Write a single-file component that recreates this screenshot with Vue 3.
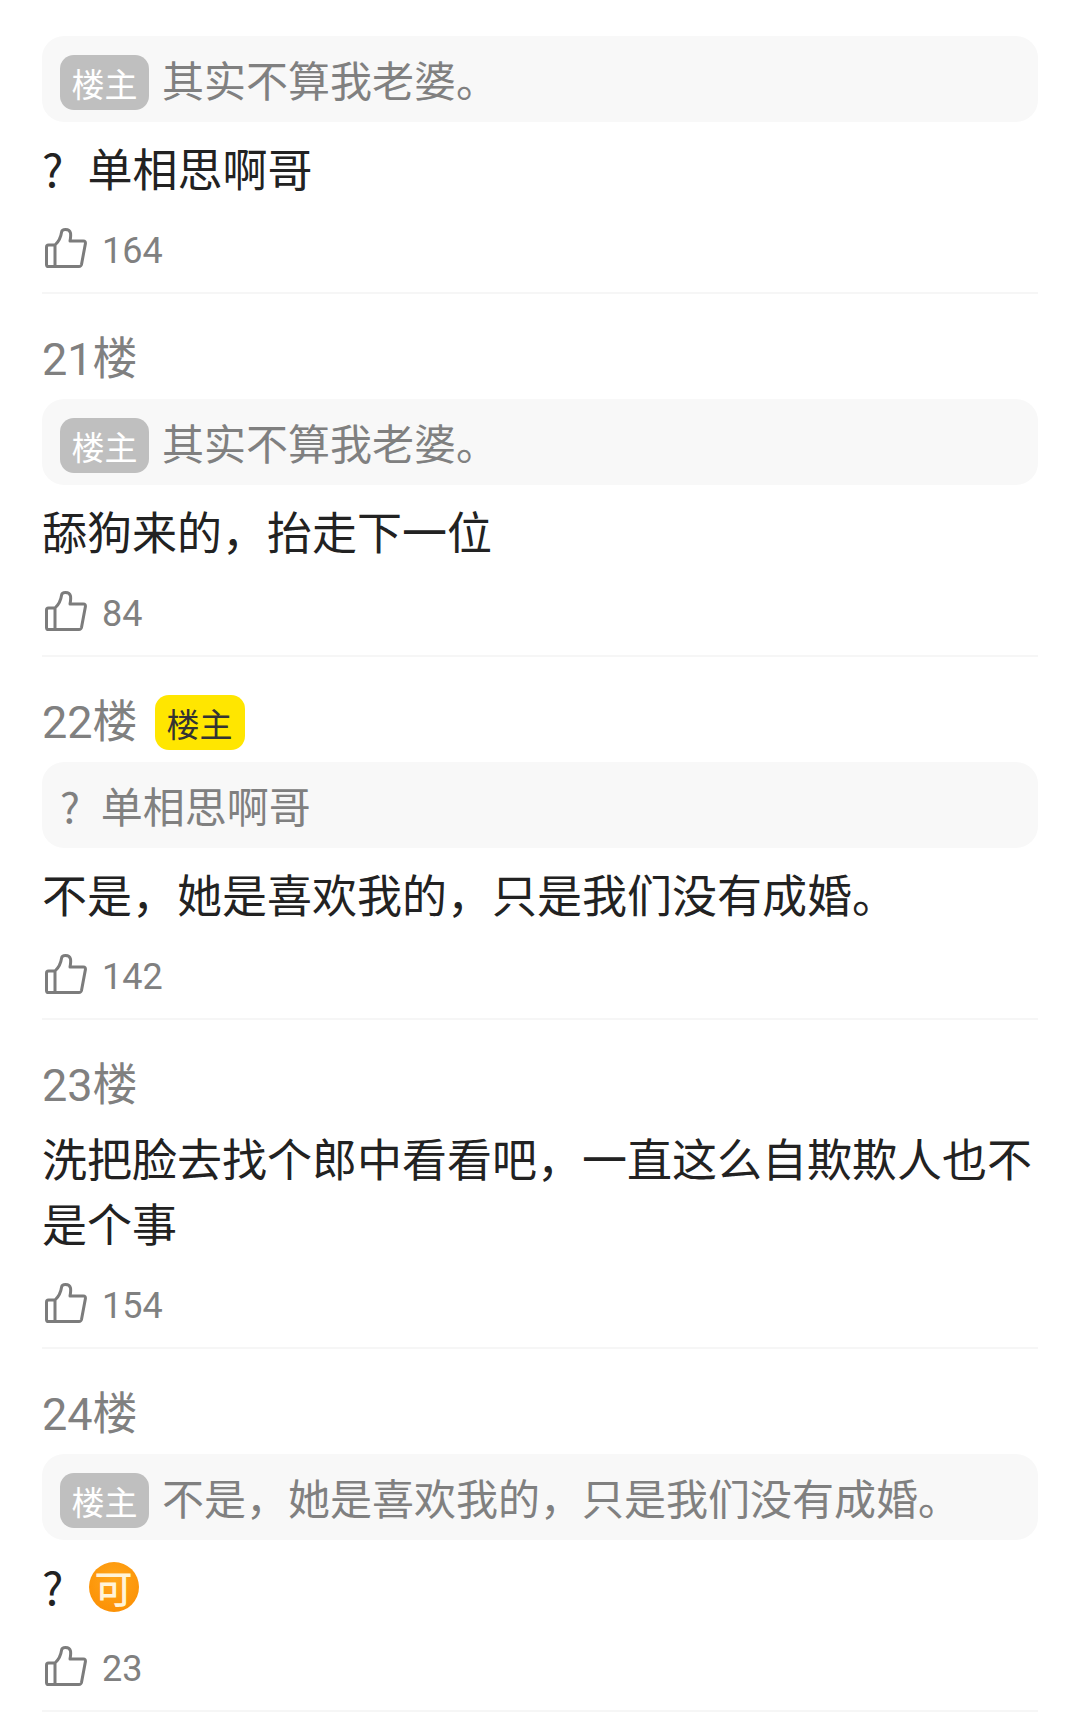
<script setup>
const OP = "楼主";

const posts = [
  { id: 20, quote: "其实不算我老婆。", quoteOp: true, text: "?  单相思啊哥", likes: 164 },
  { id: 21, floor: "21楼", quote: "其实不算我老婆。", quoteOp: true, text: "舔狗来的，抬走下一位", likes: 84 },
  { id: 22, floor: "22楼", op: true, quote: "?  单相思啊哥", text: "不是，她是喜欢我的，只是我们没有成婚。", likes: 142 },
  { id: 23, floor: "23楼", text: "洗把脸去找个郎中看看吧，一直这么自欺欺人也不是个事", likes: 154 },
  { id: 24, floor: "24楼", quote: "不是，她是喜欢我的，只是我们没有成婚。", quoteOp: true, text: "?  ", emoji: "可", likes: 23 },
];
</script>

<template>
  <div class="page">
    <div v-for="post in posts" :key="post.id" class="post">
      <div v-if="post.floor" class="floor-row">
        <span class="floor">{{ post.floor }}</span>
        <span v-if="post.op" class="tag tag-op">{{ OP }}</span>
      </div>
      <div v-if="post.quote" class="quote">
        <span v-if="post.quoteOp" class="tag tag-gray">{{ OP }}</span>
        <span class="quote-text">{{ post.quote }}</span>
      </div>
      <div class="body" :class="{ 'body-noquote': !post.quote }">
        <span>{{ post.text }}</span><span v-if="post.emoji" class="emoji">{{ post.emoji }}</span>
      </div>
      <div class="like">
        <svg class="thumb" width="42" height="40" viewBox="0 0 42 40" fill="none">
          <path
            d="M10 17 H3.5 Q1.5 17 1.5 19.2 V36.4 Q1.5 38.5 3.5 38.5 H34 Q36 38.5 36.5 36.5 L40.4 15.6 Q40.7 13 38.4 13 H25 Q26 8.5 25.5 5 Q24.8 1.5 20.5 1.5 Q17 1.5 16.6 4 Q15.5 12 10 17 Z M10 17 V38.5"
            stroke="#7c7c7c"
            stroke-width="3"
            stroke-linejoin="round"
          />
        </svg>
        <span class="count">{{ post.likes }}</span>
      </div>
    </div>
  </div>
</template>

<style scoped>
.page {
  width: 1080px;
  height: 1725px;
  overflow: hidden;
  box-sizing: border-box;
  padding: 36px 42px 0;
  font-family: Roboto, "Noto Sans CJK SC", sans-serif;
  background: #fff;
}

.post {
  border-bottom: 2px solid #f6f6f6;
  padding-bottom: 24px;
}

.floor-row {
  display: flex;
  align-items: center;
  height: 65px;
  padding-top: 33px;
  padding-bottom: 7px;
}

.floor {
  font-size: 45px;
  line-height: 65px;
  color: #808080;
}

.tag {
  display: inline-flex;
  align-items: center;
  justify-content: center;
  width: 89px;
  height: 55px;
  border-radius: 14px;
  font-size: 33px;
}

.tag-op {
  margin-left: 17px;
  width: 90px;
  background: #ffe600;
  color: #333;
}

.tag-gray {
  margin-top: 7px;
  margin-right: 13px;
  background: #bfbfbf;
  color: #fff;
}

.quote {
  display: flex;
  align-items: center;
  height: 86px;
  box-sizing: border-box;
  padding: 0 18px;
  border-radius: 22px;
  background: #f8f8f8;
}

.quote-text {
  margin-bottom: 2px;
  font-family: "Noto Sans CJK SC", sans-serif;
  font-size: 42px;
  color: #808080;
  white-space: pre-wrap;
  word-spacing: 1px;
}

.body {
  margin-top: 13px;
  font-family: "Noto Sans CJK SC", sans-serif;
  font-size: 45px;
  line-height: 65px;
  color: #222;
  white-space: pre-wrap;
  word-spacing: 2px;
}

.body-noquote {
  margin-top: 0;
}

.emoji {
  display: inline-flex;
  align-items: center;
  justify-content: center;
  vertical-align: top;
  width: 50px;
  height: 50px;
  margin-top: 9px;
  margin-left: 1px;
  border-radius: 50%;
  background: radial-gradient(circle at 50% 35%, #ffa61a, #fb8c00);
  color: #fff4d8;
  font-size: 38px;
  font-weight: 500;
  line-height: 1;
}

.like {
  display: flex;
  align-items: center;
  margin-top: 28px;
  height: 40px;
  padding-left: 3px;
}

.thumb {
  flex: none;
}

.count {
  margin-left: 15px;
  margin-top: 6px;
  font-size: 36px;
  color: #808080;
}
</style>
